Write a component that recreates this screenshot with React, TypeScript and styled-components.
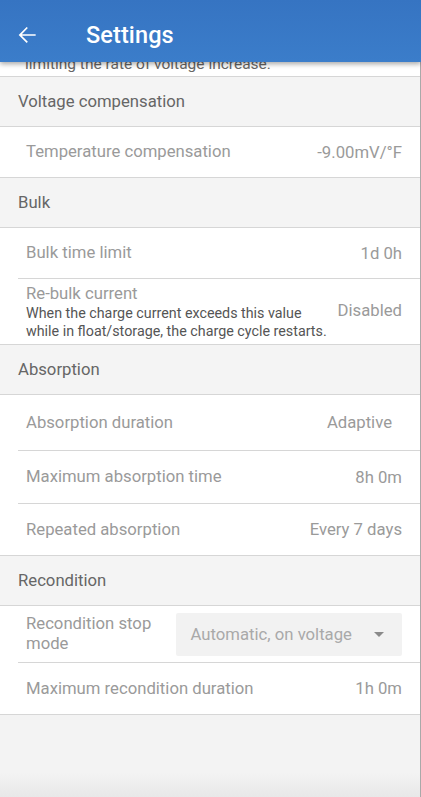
import styled, { createGlobalStyle } from "styled-components";

const GlobalStyle = createGlobalStyle`
  html, body {
    margin: 0;
    padding: 0;
    background: #f3f3f3;
    font-family: Roboto, "Noto Sans", Arial, sans-serif;
  }
  * { box-sizing: border-box; }
`;

type Item = {
  label: string;
  value?: string;
  note?: string;
  select?: string;
  h: number;
  shift?: boolean;
};
type Section = { title: string; items: Item[] };

const sections: Section[] = [
  {
    title: "Voltage compensation",
    items: [{ label: "Temperature compensation", value: "-9.00mV/°F", h: 51 }],
  },
  {
    title: "Bulk",
    items: [
      { label: "Bulk time limit", value: "1d 0h", h: 51 },
      {
        label: "Re-bulk current",
        note: "When the charge current exceeds this value while in float/storage, the charge cycle restarts.",
        value: "Disabled",
        h: 66,
      },
    ],
  },
  {
    title: "Absorption",
    items: [
      { label: "Absorption duration", value: "Adaptive", h: 56, shift: true },
      { label: "Maximum absorption time", value: "8h 0m", h: 53 },
      { label: "Repeated absorption", value: "Every 7 days", h: 52 },
    ],
  },
  {
    title: "Recondition",
    items: [
      { label: "Recondition stop mode", select: "Automatic, on voltage", h: 57 },
      { label: "Maximum recondition duration", value: "1h 0m", h: 52 },
    ],
  },
];

const App = () => {
  return (
    <Page>
      <GlobalStyle />
      <Header>
        <BackButton>
          <svg width="26" height="26" viewBox="0 0 24 24" fill="#fff">
            <path d="M20 11.2H7.2l5.6-5.6L11.7 4.6 4.3 12l7.4 7.4 1.1-1.1-5.6-5.5H20z" />
          </svg>
        </BackButton>
        <Title>Settings</Title>
      </Header>
      <List>
        <ClippedRow>
          <ClippedText>limiting the rate of voltage increase.</ClippedText>
        </ClippedRow>
        {sections.map((s) => (
          <div key={s.title}>
            <SectionHead>{s.title}</SectionHead>
            {s.items.map((it, i) => (
              <Row key={it.label} $full={i === s.items.length - 1} $h={it.h}>
                <LabelCol $narrow={!!it.select}>
                  <Label>{it.label}</Label>
                  {it.note && <Note>{it.note}</Note>}
                </LabelCol>
                {it.value && (
                  <Value $note={!!it.note} $shift={!!it.shift}>
                    {it.value}
                  </Value>
                )}
                {it.select && (
                  <Select>
                    <span>{it.select}</span>
                    <Caret />
                  </Select>
                )}
              </Row>
            ))}
          </div>
        ))}
        <Filler />
      </List>
    </Page>
  );
};

const Page = styled.div`
  min-height: 100vh;
  display: flex;
  flex-direction: column;
  width: 421px;
`;

const Header = styled.header`
  position: sticky;
  top: 0;
  z-index: 2;
  height: 62px;
  display: flex;
  align-items: center;
  gap: 46px;
  padding-left: 14px;
  background: linear-gradient(#3674c2, #3b7dca);
  box-shadow: 0 2px 5px rgba(0, 0, 0, 0.35);
`;

const BackButton = styled.div`
  display: flex;
  width: 26px;
  height: 26px;
  margin-top: 8px;
`;

const Title = styled.h1`
  margin: 8px 0 0;
  font-size: 23.5px;
  font-weight: 500;
  color: #fff;
  letter-spacing: 0.1px;
`;

const List = styled.main`
  flex: 1;
  display: flex;
  flex-direction: column;
  border-right: 1px solid #a9a9a9;
  width: 421px;
`;

const ClippedRow = styled.div`
  height: 15px;
  overflow: hidden;
  display: flex;
  align-items: flex-end;
  background: #fff;
  border-bottom: 1px solid #d6d6d6;
  padding: 0 0 3px 25px;
`;

const ClippedText = styled.div`
  font-size: 15.5px;
  line-height: 18px;
  color: #666;
  white-space: nowrap;
`;

const SectionHead = styled.div`
  height: 50px;
  display: flex;
  align-items: center;
  padding-left: 18px;
  background: #f4f4f4;
  border-bottom: 1px solid #d6d6d6;
  font-size: 16.7px;
  color: #666;
`;

const Row = styled.div<{ $full: boolean; $h: number }>`
  display: flex;
  align-items: center;
  justify-content: space-between;
  min-height: ${(p) => p.$h}px;
  background: #fff;
  margin-left: ${(p) => (p.$full ? "0" : "18px")};
  padding: 0 18px 0 ${(p) => (p.$full ? "26px" : "8px")};
  border-bottom: 1px solid #d6d6d6;
  box-shadow: ${(p) => (p.$full ? "none" : "-18px 0 0 #fff")};
`;

const LabelCol = styled.div<{ $narrow: boolean }>`
  display: flex;
  flex-direction: column;
  width: ${(p) => (p.$narrow ? "150px" : "auto")};
`;

const Label = styled.div`
  font-size: 16.7px;
  line-height: 20px;
  color: #9a9a9a;
`;

const Note = styled.div`
  font-size: 14.3px;
  line-height: 18px;
  color: #555;
  width: 308px;
`;

const Value = styled.div<{ $note: boolean; $shift: boolean }>`
  font-size: 16.7px;
  color: #9a9a9a;
  white-space: nowrap;
  margin-bottom: ${(p) => (p.$note ? "2px" : "0")};
  margin-right: ${(p) => (p.$shift ? "10px" : "0")};
`;

const Select = styled.div`
  width: 227px;
  height: 43px;
  display: flex;
  align-items: center;
  justify-content: space-between;
  padding: 0 18px 0 15px;
  background: #f2f2f2;
  border-radius: 2px;
  font-size: 16.7px;
  color: #a9a9a9;
`;

const Caret = styled.span`
  width: 0;
  height: 0;
  border-left: 5px solid transparent;
  border-right: 5px solid transparent;
  border-top: 5px solid #8a8a8a;
`;

const Filler = styled.div`
  flex: 1;
  background: linear-gradient(#f3f3f3 70%, #e8e8e8);
`;

export default App;
